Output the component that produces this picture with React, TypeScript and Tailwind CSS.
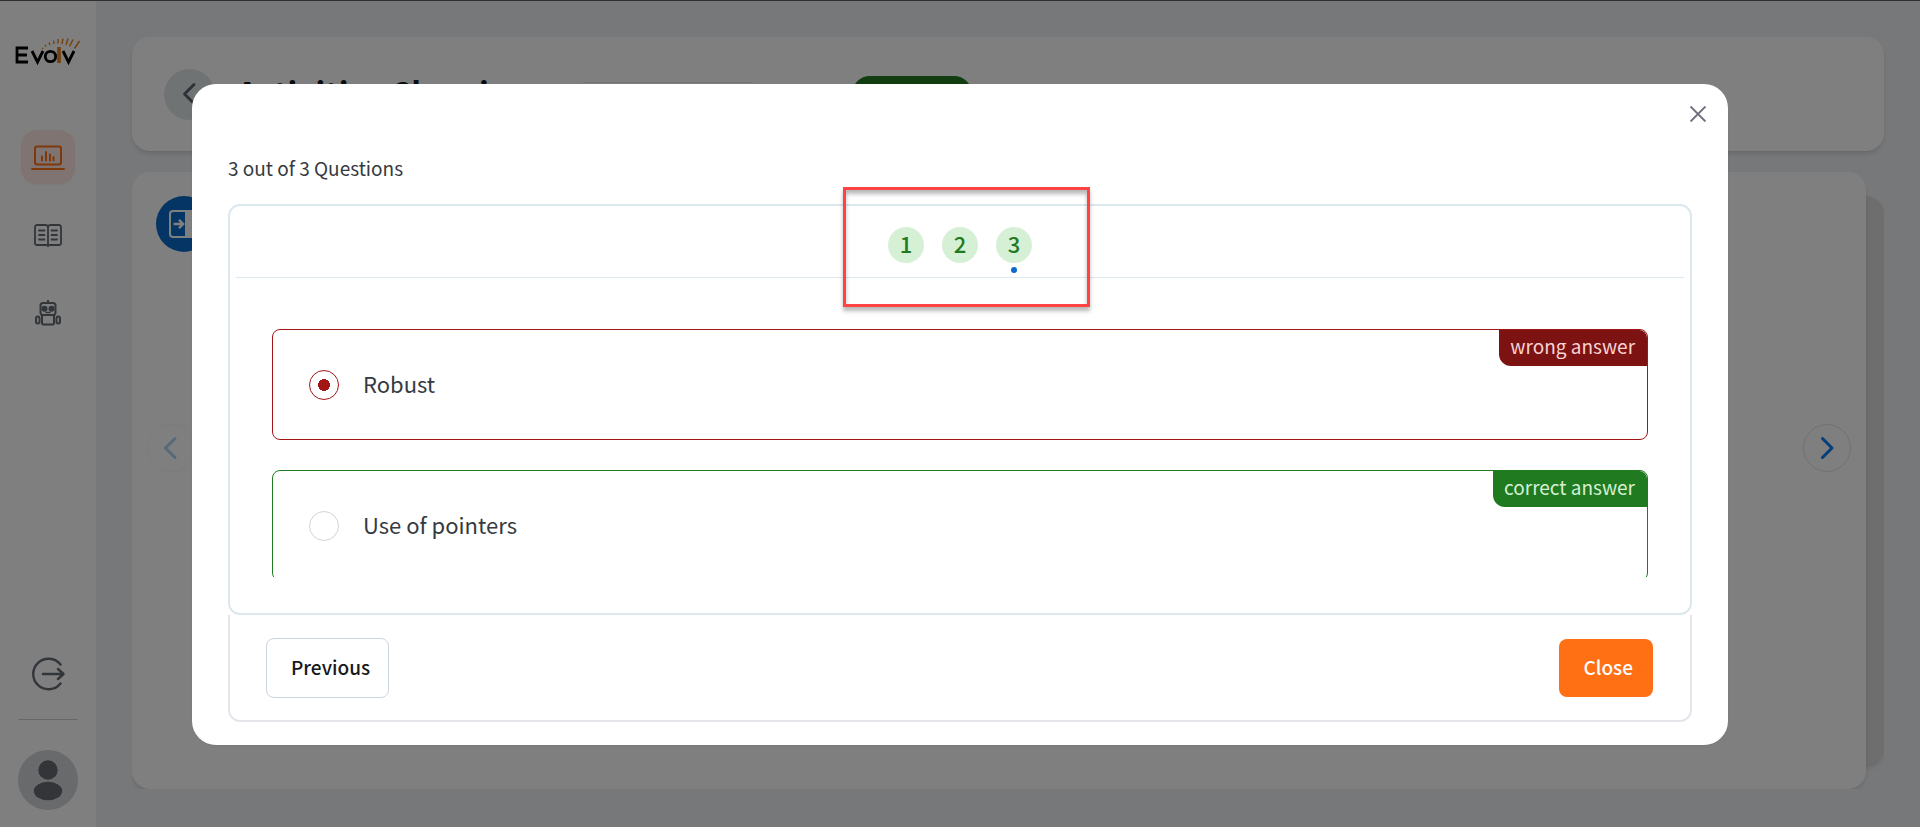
import { useState } from 'react';

type Option = {
  id: string;
  label: string;
  status: 'wrong' | 'correct';
};

const questions = [1, 2, 3];

const options: Option[] = [
  { id: 'robust', label: 'Robust', status: 'wrong' },
  { id: 'pointers', label: 'Use of pointers', status: 'correct' },
];

export default function App() {
  return (
    <div className="relative h-screen overflow-hidden bg-[#eff1f5] font-['Noto_Sans_CJK_SC',sans-serif] text-[#343a40]">
      <div className="flex h-full">
        <Sidebar />
        <CoursePage />
      </div>
      <div className="absolute inset-0 border-t border-[#2f2f31] bg-black/50" />
      <QuizReviewDialog />
    </div>
  );
}

function Sidebar() {
  return (
    <nav aria-label="Main" className="flex w-24 shrink-0 flex-col items-center bg-white pt-9 pb-[17px]">
      <a href="#home" aria-label="Evolv">
        <EvolvLogo />
      </a>
      <a href="#dashboard" aria-label="Dashboard" className="mt-16 flex size-[54px] items-center justify-center rounded-2xl bg-[#ffe9e3] text-[#ff7014] shadow-xs">
        <LaptopIcon />
      </a>
      <a href="#library" aria-label="Library" className="mt-[25px] flex size-[54px] items-center justify-center text-[#656b75]">
        <BookIcon />
      </a>
      <a href="#assistant" aria-label="Assistant" className="mt-[23px] flex size-[54px] items-center justify-center text-[#656b75]">
        <RobotIcon />
      </a>
      <button type="button" aria-label="Log out" className="mt-auto text-[#656b75]">
        <LogoutIcon />
      </button>
      <hr className="mt-7 mb-[30px] w-[60px] border-[#cfcfd2]" />
      <button type="button" aria-label="Profile">
        <svg viewBox="0 0 60 60" className="size-[60px]" fill="#686a72">
          <circle cx="30" cy="30" r="30" fill="#d3d4d8" />
          <circle cx="30" cy="20" r="9.7" />
          <ellipse cx="30" cy="41" rx="14.2" ry="9.3" />
        </svg>
      </button>
    </nav>
  );
}

function CoursePage() {
  return (
    <main className="flex min-w-0 flex-1 flex-col gap-[21px] px-9 pt-[37px] pb-[38px]">
      <header className="flex h-[114px] shrink-0 items-center gap-[22px] rounded-[18px] bg-white px-8 shadow-md">
        <button type="button" aria-label="Back" className="flex size-[51px] items-center justify-center rounded-full bg-[#dfe7e8] text-[#5d6470]">
          <Chevron direction="left" />
        </button>
        <h1 className="w-[324px] pb-1 text-[32px] leading-9 font-bold whitespace-nowrap text-[#16181b]">Activities Cleaning</h1>
        <div className="h-6 w-[170px] border-t border-[#e6e6e8]" />
        <span className="ml-[77px] h-9 w-[120px] rounded-[20px] bg-[#227b22]" />
      </header>
      <div className="relative flex min-h-0 flex-1 overflow-hidden pr-[18px]">
        <div className="absolute top-6 right-0 bottom-6 w-12 rounded-[18px] bg-[#dcdcdc] shadow-md" />
        <section className="relative flex min-w-0 flex-1 items-center justify-between rounded-[18px] bg-white px-[15px] shadow-md">
          <button type="button" aria-label="Open panel" className="absolute top-6 left-6 flex size-14 items-center justify-center rounded-full bg-[#0b6acb]">
            <svg viewBox="0 0 30 28" className="h-7 w-[30px]" fill="none" stroke="white" strokeWidth="2">
              <rect x="1" y="1" width="28" height="26" rx="3" />
              <path d="M17 1h9a3 3 0 0 1 3 3v20a3 3 0 0 1-3 3h-9z" fill="white" />
              <path d="M4.500 14h9M10 9.800L14.200 14l-4.200 4.200" strokeWidth="2.400" />
            </svg>
          </button>
          <button type="button" aria-label="Previous slide" className="mt-[-66px] flex size-12 items-center justify-center rounded-full border border-[#f7f7f7] text-[#afd4f9]">
            <Chevron direction="left" />
          </button>
          <button type="button" aria-label="Next slide" className="mt-[-66px] flex size-12 items-center justify-center rounded-full border border-[#dde3e8] text-[#0b7bf7]">
            <Chevron direction="right" />
          </button>
        </section>
      </div>
    </main>
  );
}

function QuizReviewDialog() {
  const [current, setCurrent] = useState(3);
  const [answer, setAnswer] = useState('robust');

  return (
    <div
      role="dialog"
      aria-modal="true"
      aria-label="Quiz review"
      className="absolute inset-x-[10%] top-[84px] flex flex-col rounded-3xl bg-white px-9 pt-[15px] pb-[23px] shadow-xs"
    >
      <button type="button" aria-label="Close dialog" className="-mr-[21px] flex size-[30px] items-center justify-center self-end text-[#6f6d7c]">
        <svg viewBox="0 0 14 14" className="size-4" stroke="currentColor" strokeWidth="1.800" strokeLinecap="round">
          <path d="M1 1l12 12M13 1L1 13" />
        </svg>
      </button>
      <p className="mt-[23px] mb-[21px] text-[19px] leading-[31px]">
        {current} out of {questions.length} Questions
      </p>

      <div className="rounded-xl border-2 border-[#dce7ee] px-1.5 pb-9">
        <div className="relative flex h-[72px] items-center justify-center gap-[18px] border-b border-[#dce7ee] pt-[7px]">
          {questions.map((n) => (
            <button
              key={n}
              type="button"
              onClick={() => setCurrent(n)}
              className="relative flex size-9 items-center justify-center rounded-full bg-[#d6f0d6] pb-1 text-[22px] leading-8 font-medium text-[#207a20]"
            >
              {n}
              {n === current && <span className="absolute -bottom-2.5 size-1.5 rounded-full bg-[#0b6acb]" />}
            </button>
          ))}
          <div className="pointer-events-none absolute top-[-19px] left-1/2 ml-[-117px] h-[120px] w-[247px] border-[3px] border-[#ff4343] shadow-[0_4px_4px_rgba(0,0,0,0.28),inset_0_4px_4px_rgba(0,0,0,0.28)]" />
        </div>
        <div className="mx-9 mt-[51px] flex h-[248px] flex-col gap-[30px] overflow-hidden">
          {options.map((option) => (
            <OptionCard key={option.id} option={option} checked={answer === option.id} onSelect={() => setAnswer(option.id)} />
          ))}
        </div>
      </div>

      <div className="flex h-[107px] items-center justify-between rounded-b-xl border-2 border-t-0 border-[#e5e6ec] pr-[37px] pl-9">
        <button type="button" className="h-[60px] rounded-lg border border-[#cbd5e1] pr-[18px] pl-6 text-[19px] font-medium text-[#16181b]">
          Previous
        </button>
        <button type="button" className="h-[58px] rounded-lg bg-[#ff7014] pr-5 pl-[25px] text-[19px] font-medium text-white">
          Close
        </button>
      </div>
    </div>
  );
}

function OptionCard({ option, checked, onSelect }: { option: Option; checked: boolean; onSelect: () => void }) {
  const isWrong = option.status === 'wrong';

  return (
    <label
      className={`relative flex h-[111px] shrink-0 items-center gap-6 rounded-lg border px-9 ${
        isWrong ? 'border-[#a31616]' : 'border-[#207a20]'
      }`}
    >
      <input
        type="radio"
        name="answer"
        checked={checked}
        onChange={onSelect}
        className="size-[30px] appearance-none rounded-full border border-[#d4d4d4] checked:border-[#a31616] checked:bg-[radial-gradient(circle,#a31616_6px,transparent_6px)]"
      />
      <span className="pb-1 text-[22px] leading-8">{option.label}</span>
      <span
        className={`absolute top-0 right-0 rounded-tr-lg rounded-bl-xl pr-3 pl-[11px] pb-1 text-[19px] leading-8 ${
          isWrong ? 'bg-[#7c1212] text-[#f8d4d4]' : 'bg-[#207a20] text-[#d6f0d6]'
        }`}
      >
        {isWrong ? 'wrong answer' : 'correct answer'}
      </span>
    </label>
  );
}

function Chevron({ direction }: { direction: 'left' | 'right' }) {
  return (
    <svg viewBox="0 0 24 24" className="size-6" fill="none" stroke="currentColor" strokeWidth="3" strokeLinecap="round" strokeLinejoin="round">
      <path d={direction === 'left' ? 'M16 2.500L6.500 12l9.500 9.500' : 'M7.500 2.500L17 12l-9.500 9.500'} />
    </svg>
  );
}

function EvolvLogo() {
  return (
    <svg viewBox="0 0 66 30" className="h-[30px] w-[66px]" fill="none">
      <path d="M13 12H2v14h11M2 19h10M17 15l5.500 11L28 15" stroke="#000" strokeWidth="2.800" />
      <circle cx="35.500" cy="20.500" r="5.200" stroke="#000" strokeWidth="2.800" />
      <path d="M44 11v16" stroke="#e8821c" strokeWidth="3.600" />
      <path d="M48 15l5.500 11L59 15" stroke="#000" strokeWidth="2.800" />
      <path
        d="M28 13l-1-1M31 10.500l-1-1.500M35 9l-1-2.500M39 8l-.5-3.500M43 7.500V3M47 8l1-5.500M51 9l2-6.500M54.500 10.500l3.500-7M59.500 12.500l5-7.500"
        stroke="#e8821c"
        strokeWidth="1.400"
      />
    </svg>
  );
}

function LaptopIcon() {
  return (
    <svg viewBox="0 0 34 26" className="h-[26px] w-[34px]" fill="none" stroke="currentColor" strokeWidth="2" strokeLinecap="round">
      <rect x="4" y="2.500" width="26" height="18" rx="2" />
      <path d="M1 25h32M11 12.500v4M15 8v8.500M19 10.500v6M22.500 13v3.500" />
    </svg>
  );
}

function BookIcon() {
  return (
    <svg viewBox="0 0 28 24" className="h-6 w-7" fill="none" stroke="currentColor" strokeWidth="1.800" strokeLinecap="round" strokeLinejoin="round">
      <path d="M14 2.500C13.500 1.500 12.500 1 11.500 1H3a2 2 0 0 0-2 2v16.500a1.500 1.500 0 0 0 1.500 1.500h10l1.500 1 1.500-1h10a1.500 1.500 0 0 0 1.500-1.500V3a2 2 0 0 0-2-2h-8.500c-1 0-2 .5-2.500 1.500zM14 2.500V22" />
      <path d="M5 6.500h5.500M5 11h5.500M5 15.500h5.500M17.500 6.500H23M17.500 11H23M17.500 15.500H23" />
    </svg>
  );
}

function RobotIcon() {
  return (
    <svg viewBox="0 0 28 28" className="size-7" fill="none" stroke="currentColor" strokeWidth="2">
      <path d="M14 1v3" />
      <rect x="6.500" y="4" width="15" height="12" rx="2.500" />
      <rect x="8" y="16" width="12" height="9.500" rx="1.500" />
      <rect x="2" y="17.500" width="3.500" height="7" rx="1.700" />
      <rect x="22.500" y="17.500" width="3.500" height="7" rx="1.700" />
      <circle cx="10.500" cy="9.800" r="2" fill="currentColor" />
      <circle cx="17.500" cy="9.800" r="2" fill="currentColor" />
      <path d="M11.500 13.500h5" strokeWidth="1.500" />
    </svg>
  );
}

function LogoutIcon() {
  return (
    <svg viewBox="0 0 34 34" className="size-[34px]" fill="none" stroke="currentColor" strokeWidth="2.400" strokeLinecap="round" strokeLinejoin="round">
      <path d="M29.500 7.500a15.300 15.300 0 1 0 0 19M12 17h20M27 12l5.500 5-5.500 5" />
    </svg>
  );
}
